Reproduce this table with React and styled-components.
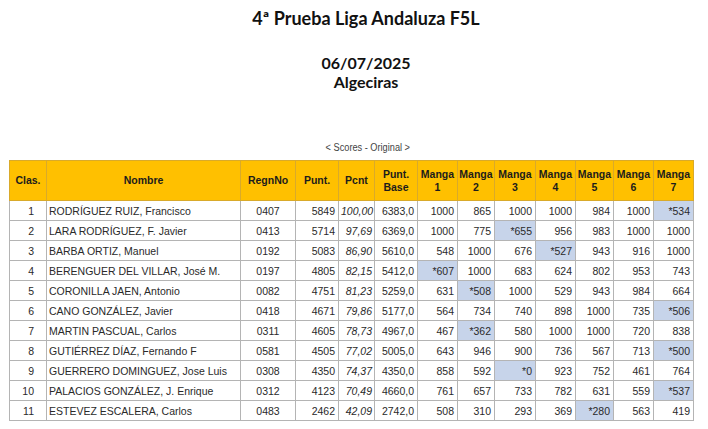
import React from "react";
import styled, { createGlobalStyle } from "styled-components";

const Global = createGlobalStyle`
  html, body { margin: 0; padding: 0; background: #fff; }
  body { font-family: "Liberation Sans", Arial, sans-serif; }
`;

const Page = styled.div`
  width: 708px;
  height: 429px;
  overflow: hidden;
  display: flex;
  flex-direction: column;
`;

const Heading = styled.div`
  display: flex;
  flex-direction: column;
  align-items: center;
  padding-left: 24px;
  font-family: Lato, "Open Sans", sans-serif;
  font-weight: 700;
  color: #111;
`;

const Title = styled.div`
  font-size: 18px;
  line-height: 22px;
  margin-top: 7px;
`;

const SubTitle = styled.div`
  font-size: 16px;
  line-height: 19px;
`;

const DateLine = styled(SubTitle)`
  margin-top: 24px;
`;

const Caption = styled.div`
  font-family: "Liberation Sans", Arial, sans-serif;
  font-size: 10px;
  color: #444;
  text-align: center;
  padding-left: 30px;
  margin-top: 51px;
  line-height: 12px;
  transform: scaleX(0.92);
`;

const Table = styled.table`
  margin: 6px 0 0 9px;
  width: 684px;
  border-collapse: collapse;
  table-layout: fixed;
  font-size: 10.5px;
  color: #2a2a2a;
`;

const Th = styled.th`
  background: #ffc000;
  border: 1px solid #d9aa2a;
  font-weight: 700;
  font-size: 10.5px;
  line-height: 13px;
  height: 39px;
  padding: 0 1px;
  color: #1c1c1c;
  text-align: center;
`;

const Td = styled.td`
  border: 1px solid #b4b4b4;
  height: 19px;
  padding: ${(p) => p.$pad || "0 3px"};
  white-space: nowrap;
  overflow: hidden;
  text-align: ${(p) => p.$align || "right"};
  font-style: ${(p) => (p.$italic ? "italic" : "normal")};
  background: ${(p) => (p.$hl ? "#c7d4ea" : "#fff")};
`;

const widths = [37, 194, 55, 43, 36, 43, 40, 37, 41, 40, 38, 40, 40];

const rows = [
  [1, "RODRÍGUEZ RUIZ, Francisco", "0407", 5849, "100,00", "6383,0", ["1000", "865", "1000", "1000", "984", "1000", "*534"]],
  [2, "LARA RODRÍGUEZ, F. Javier", "0413", 5714, "97,69", "6369,0", ["1000", "775", "*655", "956", "983", "1000", "1000"]],
  [3, "BARBA ORTIZ, Manuel", "0192", 5083, "86,90", "5610,0", ["548", "1000", "676", "*527", "943", "916", "1000"]],
  [4, "BERENGUER DEL VILLAR, José M.", "0197", 4805, "82,15", "5412,0", ["*607", "1000", "683", "624", "802", "953", "743"]],
  [5, "CORONILLA JAEN, Antonio", "0082", 4751, "81,23", "5259,0", ["631", "*508", "1000", "529", "943", "984", "664"]],
  [6, "CANO GONZÁLEZ, Javier", "0418", 4671, "79,86", "5177,0", ["564", "734", "740", "898", "1000", "735", "*506"]],
  [7, "MARTIN PASCUAL, Carlos", "0311", 4605, "78,73", "4967,0", ["467", "*362", "580", "1000", "1000", "720", "838"]],
  [8, "GUTIÉRREZ DÍAZ, Fernando F", "0581", 4505, "77,02", "5005,0", ["643", "946", "900", "736", "567", "713", "*500"]],
  [9, "GUERRERO DOMINGUEZ, Jose Luis", "0308", 4350, "74,37", "4350,0", ["858", "592", "*0", "923", "752", "461", "764"]],
  [10, "PALACIOS GONZÁLEZ, J. Enrique", "0312", 4123, "70,49", "4660,0", ["761", "657", "733", "782", "631", "559", "*537"]],
  [11, "ESTEVEZ ESCALERA, Carlos", "0483", 2462, "42,09", "2742,0", ["508", "310", "293", "369", "*280", "563", "419"]],
];

export default function App() {
  return (
    <Page>
      <Global />
      <Heading>
        <Title>4ª Prueba Liga Andaluza F5L</Title>
        <DateLine>06/07/2025</DateLine>
        <SubTitle>Algeciras</SubTitle>
      </Heading>
      <Caption>&lt; Scores - Original &gt;</Caption>
      <Table>
        <colgroup>
          {widths.map((w, i) => (
            <col key={i} style={{ width: w }} />
          ))}
        </colgroup>
        <thead>
          <tr>
            <Th>Clas.</Th>
            <Th>Nombre</Th>
            <Th>RegnNo</Th>
            <Th>Punt.</Th>
            <Th>Pcnt</Th>
            <Th>Punt.<br />Base</Th>
            {[1, 2, 3, 4, 5, 6, 7].map((n) => (
              <Th key={n}>Manga<br />{n}</Th>
            ))}
          </tr>
        </thead>
        <tbody>
          {rows.map((r) => (
            <tr key={r[0]}>
              <Td $pad="0 12px 0 0">{r[0]}</Td>
              <Td $align="left" $pad="0 2px">{r[1]}</Td>
              <Td $align="center">{r[2]}</Td>
              <Td>{r[3]}</Td>
              <Td $italic $pad="0 2px">{r[4]}</Td>
              <Td>{r[5]}</Td>
              {r[6].map((v, i) => (
                <Td key={i} $hl={v.startsWith("*")}>{v}</Td>
              ))}
            </tr>
          ))}
        </tbody>
      </Table>
    </Page>
  );
}
